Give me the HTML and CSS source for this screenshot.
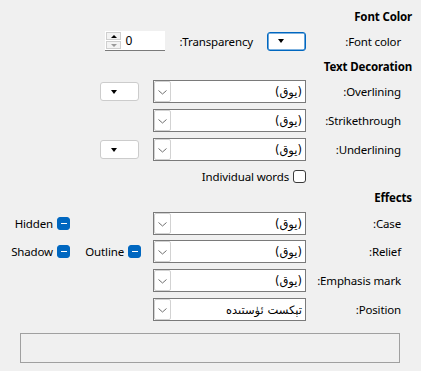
FILE: index.html
```html
<!DOCTYPE html>
<html dir="rtl" lang="ug">
<head>
<meta charset="utf-8">
<link rel="stylesheet" href="styles.css">
</head>
<body>
<div class="dlg">
  <div class="hdr hdr-first">Font Color</div>
  <div class="row row-fc">
    <div class="lbl">Font color:</div>
    <div class="colorbtn focus"><span class="tri"></span></div>
    <div class="txt">Transparency:</div>
    <div class="spin">
      <div class="spinbtns">
        <div class="sb"><span class="up"></span></div>
        <div class="sb"><span class="down"></span></div>
      </div>
      <div class="val">0</div>
    </div>
  </div>

  <div class="hdr hdr-mid">Text Decoration</div>
  <div class="row row-first">
    <div class="lbl">Overlining:</div>
    <div class="combo"><span class="ctext">(يوق)</span><span class="cbtn"><svg width="15" height="19" viewBox="0 0 15 19"><path d="M3.5 8.5 L7.5 12 L11.5 8.5" fill="none" stroke="#707070" stroke-width="1"/></svg></span></div>
    <div class="colorbtn side"><span class="tri"></span></div>
  </div>
  <div class="row">
    <div class="lbl">Strikethrough:</div>
    <div class="combo"><span class="ctext">(يوق)</span><span class="cbtn"><svg width="15" height="19" viewBox="0 0 15 19"><path d="M3.5 8.5 L7.5 12 L11.5 8.5" fill="none" stroke="#707070" stroke-width="1"/></svg></span></div>
  </div>
  <div class="row">
    <div class="lbl">Underlining:</div>
    <div class="combo"><span class="ctext">(يوق)</span><span class="cbtn"><svg width="15" height="19" viewBox="0 0 15 19"><path d="M3.5 8.5 L7.5 12 L11.5 8.5" fill="none" stroke="#707070" stroke-width="1"/></svg></span></div>
    <div class="colorbtn side"><span class="tri"></span></div>
  </div>
  <div class="row row-indiv">
    <div class="lbl"></div>
    <div class="opt"><span class="cb"></span><span>Individual words</span></div>
  </div>

  <div class="hdr hdr-eff">Effects</div>
  <div class="row row-case">
    <div class="lbl">Case:</div>
    <div class="combo"><span class="ctext">(يوق)</span><span class="cbtn"><svg width="15" height="19" viewBox="0 0 15 19"><path d="M3.5 8.5 L7.5 12 L11.5 8.5" fill="none" stroke="#707070" stroke-width="1"/></svg></span></div>
    <div class="opt cell"></div>
    <div class="opt"><span class="cb on"></span><span>Hidden</span></div>
  </div>
  <div class="row row-relief">
    <div class="lbl">Relief:</div>
    <div class="combo"><span class="ctext">(يوق)</span><span class="cbtn"><svg width="15" height="19" viewBox="0 0 15 19"><path d="M3.5 8.5 L7.5 12 L11.5 8.5" fill="none" stroke="#707070" stroke-width="1"/></svg></span></div>
    <div class="opt cell"><span class="cb on"></span><span>Outline</span></div>
    <div class="opt"><span class="cb on"></span><span>Shadow</span></div>
  </div>
  <div class="row">
    <div class="lbl">Emphasis mark:</div>
    <div class="combo"><span class="ctext">(يوق)</span><span class="cbtn"><svg width="15" height="19" viewBox="0 0 15 19"><path d="M3.5 8.5 L7.5 12 L11.5 8.5" fill="none" stroke="#707070" stroke-width="1"/></svg></span></div>
  </div>
  <div class="row">
    <div class="lbl">Position:</div>
    <div class="combo"><span class="ctext">تېكست ئۈستىدە</span><span class="cbtn"><svg width="15" height="19" viewBox="0 0 15 19"><path d="M3.5 8.5 L7.5 12 L11.5 8.5" fill="none" stroke="#707070" stroke-width="1"/></svg></span></div>
  </div>

  <div class="preview"></div>
</div>
</body>
</html>
```

FILE: styles.css
```css
html, body {
  margin: 0;
  padding: 0;
  background: #f0f0f0;
  width: 421px;
  height: 371px;
  overflow: hidden;
}

body {
  font-family: "Noto Sans", "DejaVu Sans", sans-serif;
  font-size: 11.5px;
  letter-spacing: -0.15px;
  color: #000;
}

.dlg {
  padding-top: 9px;
}

.hdr {
  height: 16px;
  line-height: 16px;
  font-weight: 700;
  padding-right: 9px;
}

.hdr-mid { margin-top: 8px; }
.hdr-eff { margin-top: 7px; }

.row {
  display: flex;
  align-items: center;
  margin-right: 20px;
  height: 23px;
  margin-top: 6px;
}

.row-fc { height: 20px; margin-top: 6px; }
.row-first { margin-top: 5px; }
.row-indiv { height: 13px; margin-top: 9px; }
.row-case { margin-top: 6px; }
.row-relief { margin-top: 5px; }

.lbl {
  width: 95px;
  flex: none;
  white-space: nowrap;
}

.txt {
  margin-right: 14px;
  white-space: nowrap;
}

.combo {
  width: 153px;
  height: 23px;
  box-sizing: border-box;
  border: 1px solid #7a7a7a;
  background: #fff;
  display: flex;
  align-items: center;
  flex: none;
}

.ctext {
  flex: 1;
  padding-right: 3px;
  font-family: "DejaVu Sans", sans-serif;
  font-size: 11.5px;
  letter-spacing: 0;
  white-space: nowrap;
}

.cbtn {
  width: 17px;
  height: 21px;
  box-sizing: border-box;
  border: 1px solid #d2d2d2;
  border-radius: 2px;
  display: flex;
  align-items: center;
  justify-content: center;
  flex: none;
}

.cbtn svg { display: block; }

.colorbtn {
  width: 39px;
  height: 19px;
  box-sizing: border-box;
  border: 1px solid #cccccc;
  border-radius: 3px;
  background: #fff;
  display: flex;
  align-items: center;
  justify-content: flex-end;
  padding-left: 10px;
  flex: none;
}

.colorbtn.focus {
  border: 1px solid #0067c0;
  box-shadow: inset 0 0 0 0.6px #0067c0;
}

.colorbtn.side {
  margin-right: 14px;
}

.tri {
  width: 0;
  height: 0;
  border-left: 3.5px solid transparent;
  border-right: 3.5px solid transparent;
  border-top: 4px solid #000;
}

.spin {
  direction: ltr;
  display: flex;
  align-items: center;
  width: 60px;
  height: 20px;
  box-sizing: border-box;
  background: #fff;
  border-bottom: 1px solid #7a7a7a;
  margin-right: 14px;
  flex: none;
}

.spinbtns {
  display: flex;
  flex-direction: column;
  gap: 1px;
  padding-left: 1px;
}

.sb {
  width: 15px;
  height: 8px;
  box-sizing: border-box;
  border: 1px solid #cfcfcf;
  background: #f3f3f3;
  display: flex;
  align-items: center;
  justify-content: center;
}

.up {
  width: 0;
  height: 0;
  border-left: 3px solid transparent;
  border-right: 3px solid transparent;
  border-bottom: 3px solid #000;
}

.down {
  width: 0;
  height: 0;
  border-left: 3px solid transparent;
  border-right: 3px solid transparent;
  border-top: 3px solid #9a9a9a;
}

.val {
  padding-left: 4px;
  font-size: 12px;
}

.opt {
  display: flex;
  align-items: center;
  gap: 4px;
  white-space: nowrap;
}

.opt.cell {
  width: 71px;
  margin-right: 12px;
  flex: none;
}

.cb {
  width: 13px;
  height: 13px;
  box-sizing: border-box;
  border: 1px solid #3a3a3a;
  border-radius: 3px;
  background: #fff;
  flex: none;
  display: flex;
  align-items: center;
  justify-content: center;
}

.cb.on {
  background: #0067c0;
  border-color: #0067c0;
}

.cb.on::after {
  content: "";
  width: 6px;
  height: 1.5px;
  background: #fff;
}

.preview {
  margin: 12px 21px 0 20px;
  height: 30px;
  box-sizing: border-box;
  border: 1px solid #a0a0a0;
}
```
